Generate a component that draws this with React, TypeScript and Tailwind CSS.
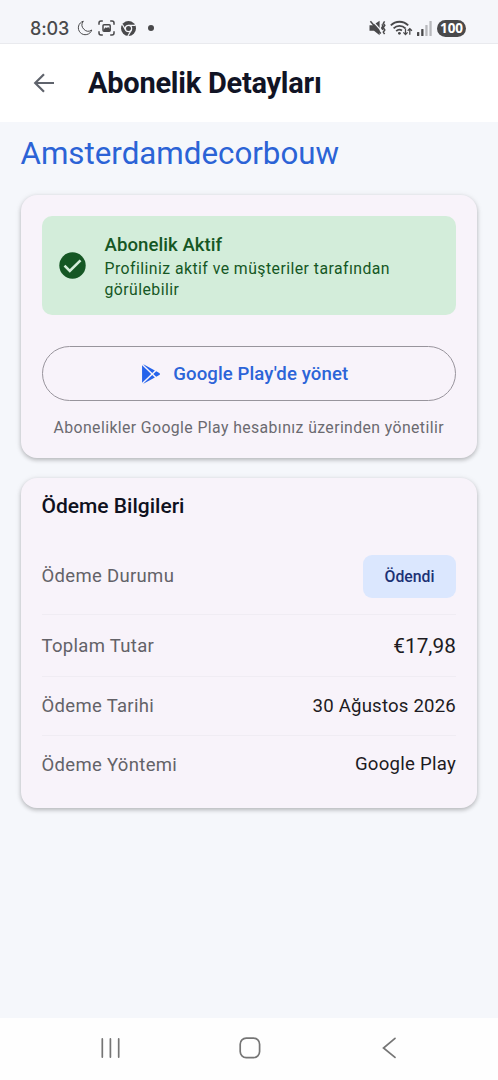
import { IoLogoGooglePlaystore } from 'react-icons/io5';

const payment = [
  { label: 'Toplam Tutar', value: '€17,98', row: 'h-[62px]', text: 'pt-[3px] text-[20.7px] tracking-[0.1px]' },
  { label: 'Ödeme Tarihi', value: '30 Ağustos 2026', row: 'h-[59px]', text: 'pt-px text-[18.6px] tracking-[0.2px]' },
  { label: 'Ödeme Yöntemi', value: 'Google Play', row: 'h-[58px]', text: 'pt-px text-[18.6px] tracking-[0.25px]' },
];

const StatusBar = () => (
  <div className="flex h-[44px] shrink-0 items-end justify-between border-b border-[#e9eaee] bg-[#f5f6fa] pr-8 pb-[5px] pl-[30px] text-[#49494b]">
    <div className="flex h-5 items-center">
      <span className="w-[47px] pt-px font-['Inter'] text-[18px] font-medium tracking-[-0.1px] whitespace-nowrap">8:03</span>
      <svg className="h-4 w-4" viewBox="0 0 16 16" fill="none" stroke="currentColor" strokeWidth="1">
        <path d="M6.3 1.2A6.9 6.9 0 1 0 14.8 10 6.2 6.2 0 0 1 6.3 1.2Z" />
      </svg>
      <svg className="ml-[5px] h-4 w-[17px]" viewBox="0 0 17 16" fill="none" stroke="currentColor" strokeWidth="1.5">
        <path d="M1 4.8V3a2 2 0 0 1 2-2h1.8M12.2 1H14a2 2 0 0 1 2 2v1.8M16 11.2V13a2 2 0 0 1-2 2h-1.8M4.8 15H3a2 2 0 0 1-2-2v-1.8" />
        <rect x="5" y="4.7" width="7.2" height="6.6" rx="1" />
        <path d="M5.5 9.5 7.7 7.3l1.2.8 1.2-1.2 2 2v2.4H5.5Z" fill="currentColor" stroke="none" />
      </svg>
      <svg className="ml-[6px] h-[15px] w-[15px]" viewBox="0 0 24 24" fill="none">
        <circle cx="12" cy="12" r="12" fill="currentColor" />
        <circle cx="12" cy="12" r="5" stroke="#f5f6fa" strokeWidth="2" />
        <path d="M12 6.8h11M7.5 14.6 2 5.2M16.5 14.6 11 24" stroke="#f5f6fa" strokeWidth="2" />
      </svg>
      <span className="ml-[12px] h-[6px] w-[6px] rounded-full bg-[#49494b]" />
    </div>
    <div className="flex h-5 items-center">
      <svg className="h-4 w-[17px]" viewBox="0 0 17 16" fill="none" stroke="currentColor">
        <path d="M.5 5.3h3.4L10.6.8v14.4l-5.6-4.4H.5Z" fill="currentColor" stroke="none" />
        <path d="M3.2.6 12.6 11" stroke="#f5f6fa" strokeWidth="1.2" />
        <path d="m1.4 1.2 10.4 12.2" strokeWidth="1.5" />
        <path d="m12.9 4.4 1 1.5-1.2 2 1.2 2M15.6 1.4l-1.3 2 1.5 2-1.5 2.3 1.5 2.2-1.5 2.2 1.3 2" strokeWidth="1.5" />
      </svg>
      <svg className="ml-[4px] h-4 w-[23px]" viewBox="0 0 23 16" fill="none" stroke="currentColor" strokeWidth="1.8">
        <path d="M.8 5.4a12.2 12.2 0 0 1 17.4 0M3.6 8.3a8.3 8.3 0 0 1 11.8 0M6.2 11.1a4.6 4.6 0 0 1 5.8-.6" />
        <circle cx="9.4" cy="13.3" r="1.4" fill="currentColor" stroke="none" />
        <path d="M15.5 8.5v6M13.4 12.4l2.1 2.2 2.1-2.2M19.8 14.8v-6M17.7 10.8l2.1-2.2 2.1 2.2" strokeWidth="1.3" />
      </svg>
      <svg className="ml-[4px] h-4 w-[15px]" viewBox="0 0 15 16" fill="currentColor">
        <rect x="0" y="12" width="2.3" height="4" rx=".6" />
        <rect x="4.2" y="9" width="2.3" height="7" rx=".6" />
        <rect x="8.3" y="5" width="2.3" height="11" rx=".6" opacity=".35" />
        <rect x="12.4" y="1" width="2.3" height="15" rx=".6" opacity=".35" />
      </svg>
      <span className="ml-[5px] flex h-[17px] w-[29px] items-center justify-center rounded-full bg-[#49494b] pt-px font-['Open_Sans'] text-[13.5px] leading-none font-bold text-white">
        100
      </span>
    </div>
  </div>
);

const Header = () => (
  <header className="flex h-[78px] shrink-0 items-center bg-white pl-[33px]">
    <svg className="h-[22px] w-[22px] text-[#5f636c]" viewBox="0 0 22 22" fill="none" stroke="currentColor" strokeWidth="2.2">
      <path d="M21 11H2.4M11 2.2 2.2 11l8.8 8.8" />
    </svg>
    <h1 className="ml-[33px] text-[29px] leading-none font-bold tracking-[-0.25px] whitespace-nowrap text-[#111425]">
      Abonelik Detayları
    </h1>
  </header>
);

const cardShadow = 'shadow-[0_2px_4px_rgba(0,0,0,0.2),0_1px_6px_rgba(0,0,0,0.1)]';

const SubscriptionCard = () => (
  <section className={`mt-[10px] h-[263px] rounded-[16px] bg-[#f8f3fa] px-[21px] pt-[21px] ${cardShadow}`}>
    <div className="flex h-[99px] items-center rounded-[10px] bg-[#d3edda] pl-[17px]">
      <svg className="h-7 w-7 shrink-0" viewBox="0 0 28 28" fill="none">
        <circle cx="13.5" cy="13.5" r="13.2" fill="#155724" />
        <path d="m5.5 13.7 5.3 5.3L21.5 8.3" stroke="#d3edda" strokeWidth="2.6" />
      </svg>
      <div className="mt-px ml-[18px] whitespace-nowrap text-[#155724]">
        <p className="text-[18.6px] leading-[26px] font-medium tracking-[0.05px]">Abonelik Aktif</p>
        <p className="text-[15.8px] leading-[21px] tracking-[0.45px]">
          Profiliniz aktif ve müşteriler tarafından
          <br />
          görülebilir
        </p>
      </div>
    </div>
    <button className="mt-[31px] flex h-[55px] w-full items-center justify-center rounded-full border border-[#98949c] pr-[9px] text-[#2c64d8]">
      <IoLogoGooglePlaystore className="h-[22px] w-[22px] text-[#2563eb]" />
      <span className="ml-[11px] pt-[2px] text-[18.6px] font-medium tracking-[0.1px]">Google Play'de yönet</span>
    </button>
    <p className="mt-[16px] text-center text-[15.8px] leading-[22px] tracking-[0.4px] whitespace-nowrap text-[#6b6a70]">
      Abonelikler Google Play hesabınız üzerinden yönetilir
    </p>
  </section>
);

const PaymentCard = () => (
  <section className={`mt-[20px] h-[330px] rounded-[16px] bg-[#f8f3fa] px-[21px] pt-[14px] ${cardShadow}`}>
    <h3 className="text-[21px] leading-[28px] font-medium whitespace-nowrap text-[#0f1120]">Ödeme Bilgileri</h3>
    <div className="mt-[18px] flex h-[77px] items-center justify-between border-b border-[#f0ecf3]">
      <span className="pt-[2px] text-[18.5px] tracking-[0.32px] text-[#636268]">Ödeme Durumu</span>
      <span className="flex h-[43px] w-[93px] items-center justify-center rounded-[9px] bg-[#dbe7fe] pt-[2px] text-[15.8px] font-medium text-[#1b3275]">
        Ödendi
      </span>
    </div>
    {payment.map(({ label, value, row, text }) => (
      <div key={label} className={`flex items-center justify-between border-b border-[#f0ecf3] last:border-transparent ${row}`}>
        <span className="pt-[2px] text-[18.5px] tracking-[0.32px] text-[#636268]">{label}</span>
        <span className={`text-[#1d1b22] ${text}`}>{value}</span>
      </div>
    ))}
  </section>
);

const NavBar = () => (
  <nav className="flex h-[62px] shrink-0 items-center justify-between bg-[#fefefe] pr-[101px] pb-[2px] pl-[100px] text-[#757575]">
    <svg className="h-5 w-5" viewBox="0 0 20 20" fill="none" stroke="currentColor" strokeWidth="1.7" strokeLinecap="round">
      <path d="M2.3 .9v18.2M10.4 .9v18.2M18.7 .9v18.2" />
    </svg>
    <svg className="-ml-[2px] h-[22px] w-[22px]" viewBox="0 0 22 22" fill="none" stroke="currentColor" strokeWidth="1.7">
      <rect x="1.2" y="1.2" width="19.4" height="19.4" rx="6" />
    </svg>
    <svg className="h-[22px] w-[15px]" viewBox="0 0 15 22" fill="none" stroke="currentColor" strokeWidth="1.7" strokeLinecap="round">
      <path d="M13 1.4 1.5 11 13 20.4" />
    </svg>
  </nav>
);

export default function App() {
  return (
    <div className="flex h-[1080px] w-[498px] flex-col overflow-hidden bg-[#f5f7fb] font-['Roboto','Noto_Sans',sans-serif]">
      <StatusBar />
      <Header />
      <main className="flex-1 pt-[11px] pr-[21px] pl-[20.5px]">
        <h2 className="h-[52px] text-[31.3px] leading-[42px] whitespace-nowrap text-[#2b63d6]">Amsterdamdecorbouw</h2>
        <SubscriptionCard />
        <PaymentCard />
      </main>
      <NavBar />
    </div>
  );
}
